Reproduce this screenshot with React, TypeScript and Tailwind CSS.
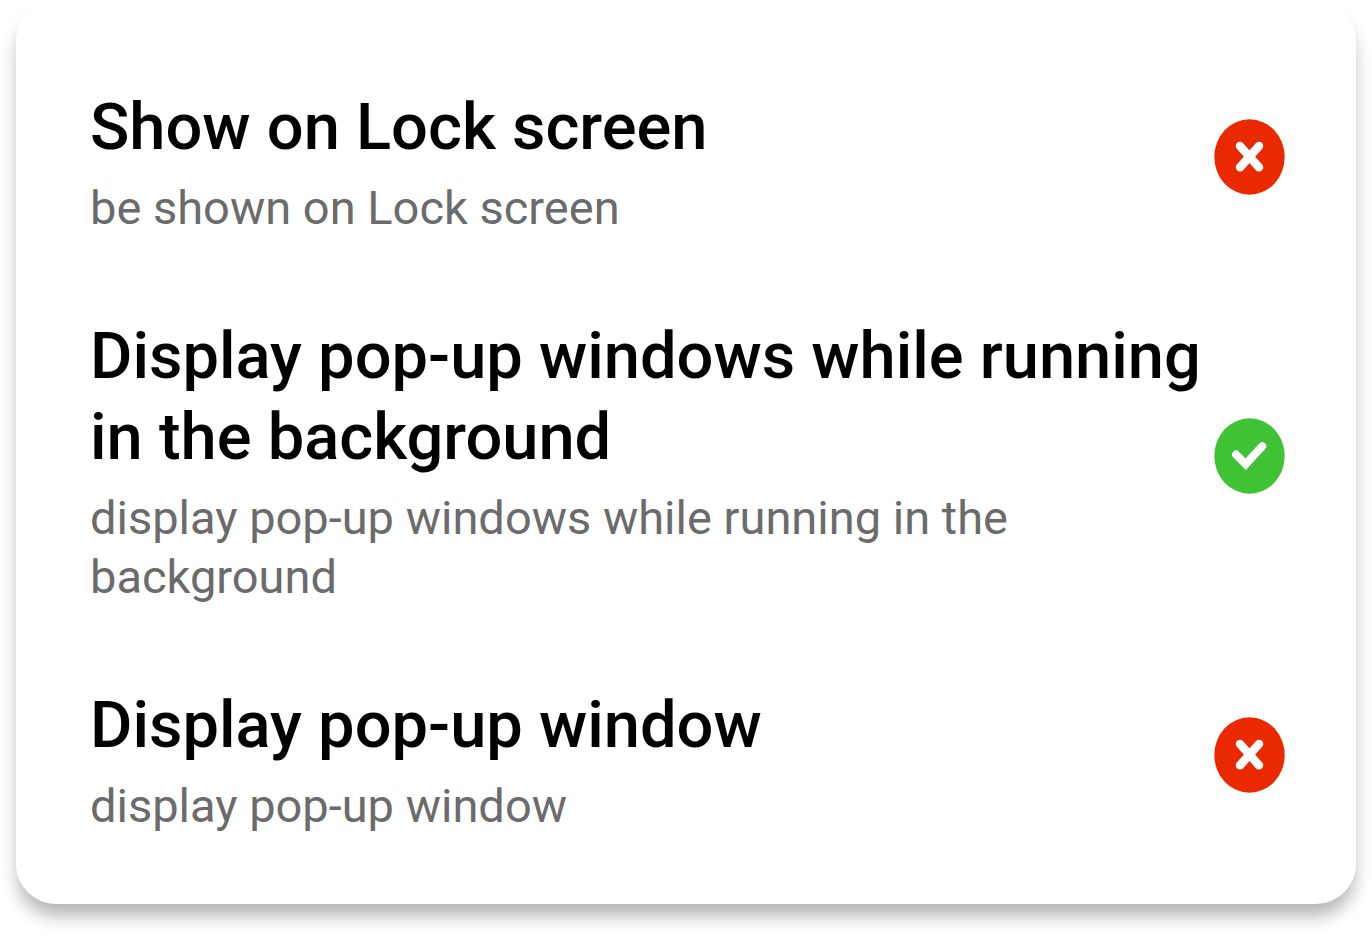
type Permission = { title: string; detail: string; allowed: boolean };

const permissions: Permission[] = [
  { title: "Show on Lock screen", detail: "be shown on Lock screen", allowed: false },
  {
    title: "Display pop-up windows while running in the background",
    detail: "display pop-up windows while running in the background",
    allowed: true,
  },
  { title: "Display pop-up window", detail: "display pop-up window", allowed: false },
];

function StatusIcon({ allowed }: { allowed: boolean }) {
  return (
    <svg
      role="img"
      aria-label={allowed ? "Allowed" : "Denied"}
      viewBox="0 0 71 76"
      className="mb-2.5 h-[76px] w-[71px] shrink-0"
      fill="none"
      stroke="#fff"
      strokeLinecap="round"
    >
      <ellipse cx="35.5" cy="38" rx="35.2" ry="37.7" stroke="none" fill={allowed ? "#3fc233" : "#eb2900"} />
      {allowed ? (
        <path d="M22 36.5 L31.7 46.3 L48.2 28.3" strokeWidth="8" />
      ) : (
        <path d="M26 27 L45 48.3 M45 27 L26 48.3" strokeWidth="8.5" />
      )}
    </svg>
  );
}

export default function App() {
  return (
    <main className="min-h-screen bg-white px-4 pb-8 font-['Roboto',sans-serif]">
      <ul className="flex flex-col gap-[79px] rounded-[40px] bg-white pt-[87px] pr-[71px] pb-[69px] pl-[74px] shadow-[0_14px_17px_-2px_rgba(0,0,0,0.29)]">
        {permissions.map(({ title, detail, allowed }) => (
          <li key={title} className="flex items-center justify-between">
            <div className="flex min-w-0 flex-1 flex-col gap-2.5">
              <h2 className="text-[65px] leading-[81px] font-medium text-black">{title}</h2>
              <p className="text-[47px] leading-[59px] text-[#6b6b6b]">{detail}</p>
            </div>
            <StatusIcon allowed={allowed} />
          </li>
        ))}
      </ul>
    </main>
  );
}
